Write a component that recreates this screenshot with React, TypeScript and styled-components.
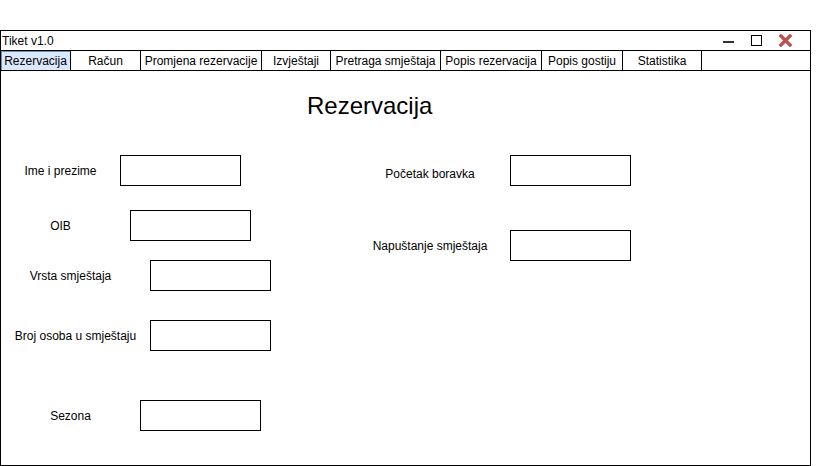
import styled, { createGlobalStyle } from "styled-components";

const GlobalStyle = createGlobalStyle`
    html, body {
        margin: 0;
        padding: 0;
        background: #fff;
    }
    body {
        font-family: "Liberation Sans", Arial, Helvetica, sans-serif;
        color: #000;
    }
`

const Page = styled.div`
    padding-top: 30px;
`

const Window = styled.div`
    width: 811px;
    height: 436px;
    box-sizing: border-box;
    border: 1px solid #000;
    display: flex;
    flex-direction: column;
`

const TitleBar = styled.div`
    height: 20px;
    box-sizing: border-box;
    border-bottom: 1px solid #000;
    display: flex;
    align-items: center;
    justify-content: space-between;
    padding: 0 18px 0 1px;
    font-size: 12px;
`

const Controls = styled.div`
    display: flex;
    align-items: center;
    gap: 17px;
`

const Minimize = styled.span`
    display: block;
    width: 11px;
    height: 2px;
    background: #333;
    margin-top: 2px;
`

const Maximize = styled.span`
    display: block;
    width: 11px;
    height: 11px;
    box-sizing: border-box;
    border: 1px solid #000;
`

const TabBar = styled.div`
    height: 20px;
    box-sizing: border-box;
    border-bottom: 1px solid #000;
    display: flex;
`

const Tab = styled.div<{ $w: number; $active?: boolean }>`
    width: ${p => p.$w}px;
    box-sizing: border-box;
    border-right: 1px solid #000;
    display: flex;
    align-items: center;
    justify-content: center;
    font-size: 12px;
    white-space: nowrap;
    background: ${p => p.$active ? '#dae8fc' : 'transparent'};
    box-shadow: ${p => p.$active ? 'inset 1px 1px 0 #6c8ebf' : 'none'};
`

const Body = styled.div`
    flex: 1;
    display: flex;
    flex-direction: column;
`

const Heading = styled.h1`
    margin: 21px 0 0;
    padding-left: 306px;
    font-size: 24px;
    font-weight: normal;
    line-height: 28px;
`

const Columns = styled.div`
    display: grid;
    grid-template-columns: 369px 1fr;
    margin-top: 35px;
`

const Column = styled.div`
    display: flex;
    flex-direction: column;
`

const Row = styled.div<{ $top?: number }>`
    display: flex;
    align-items: center;
    margin-top: ${p => p.$top ?? 0}px;
`

const Label = styled.span<{ $w: number; $drop?: number }>`
    width: ${p => p.$w}px;
    text-align: center;
    font-size: 12px;
    white-space: nowrap;
    padding-top: ${p => p.$drop ?? 0}px;
`

const InputBox = styled.div<{ $gap?: number }>`
    width: 121px;
    height: 31px;
    box-sizing: border-box;
    border: 1px solid #000;
    margin-left: ${p => p.$gap ?? 0}px;
`

const tabs = [
    { name: 'Rezervacija', w: 70 },
    { name: 'Račun', w: 70 },
    { name: 'Promjena rezervacije', w: 121 },
    { name: 'Izvještaji', w: 69 },
    { name: 'Pretraga smještaja', w: 110 },
    { name: 'Popis rezervacija', w: 101 },
    { name: 'Popis gostiju', w: 81 },
    { name: 'Statistika', w: 79 },
]

const leftFields = [
    { label: 'Ime i prezime', w: 119, gap: 0, top: 0 },
    { label: 'OIB', w: 119, gap: 10, top: 24 },
    { label: 'Vrsta smještaja', w: 139, gap: 10, top: 19 },
    { label: 'Broj osoba u smještaju', w: 149, gap: 0, top: 29 },
    { label: 'Sezona', w: 139, gap: 0, top: 49 },
]

const rightFields = [
    { label: 'Početak boravka', w: 120, gap: 20, top: 0, drop: 6 },
    { label: 'Napuštanje smještaja', w: 120, gap: 20, top: 44, drop: 0 },
]

function CloseIcon() {
    return <svg width="13" height="13" viewBox="0 0 13 13">
        <path d="M2 2 L11 11 M11 2 L2 11" stroke="#b85450" strokeWidth="3.4" strokeLinecap="square" />
    </svg>
}

export default function App() {
    return <>
        <GlobalStyle />
        <Page>
            <Window>
                <TitleBar>
                    <span>Tiket v1.0</span>
                    <Controls>
                        <Minimize />
                        <Maximize />
                        <CloseIcon />
                    </Controls>
                </TitleBar>
                <TabBar>
                    {tabs.map((t, i) => <Tab key={t.name} $w={t.w} $active={i === 0}>{t.name}</Tab>)}
                </TabBar>
                <Body>
                    <Heading>Rezervacija</Heading>
                    <Columns>
                        <Column>
                            {leftFields.map(f => <Row key={f.label} $top={f.top}>
                                <Label $w={f.w}>{f.label}</Label>
                                <InputBox $gap={f.gap} />
                            </Row>)}
                        </Column>
                        <Column>
                            {rightFields.map(f => <Row key={f.label} $top={f.top}>
                                <Label $w={f.w} $drop={f.drop}>{f.label}</Label>
                                <InputBox $gap={f.gap} />
                            </Row>)}
                        </Column>
                    </Columns>
                </Body>
            </Window>
        </Page>
    </>
}
